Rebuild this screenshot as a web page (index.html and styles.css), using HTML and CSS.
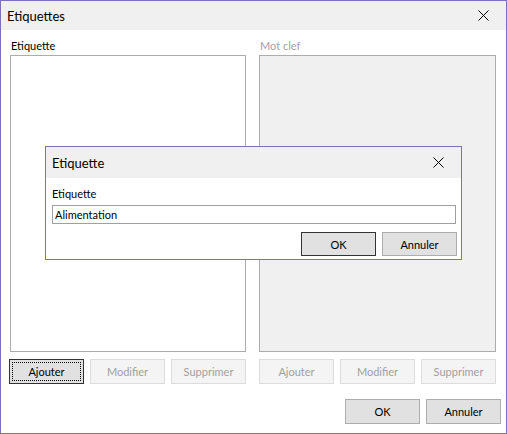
FILE: index.html
```html
<!DOCTYPE html>
<html lang="fr">
<head>
<meta charset="utf-8">
<title>Etiquettes</title>
<link rel="stylesheet" href="styles.css">
</head>
<body>
<div class="window">
  <div class="titlebar">
    <span class="title">Etiquettes</span>
    <span class="close">
      <svg width="11" height="11" viewBox="0 0 11 11"><path d="M0.5 0.5 L10.5 10.5 M10.5 0.5 L0.5 10.5" stroke="#000" stroke-width="1" fill="none"/></svg>
    </span>
  </div>
  <div class="content">
    <div class="columns">
      <div class="col col-left">
        <div class="label">Etiquette</div>
        <div class="listbox"></div>
        <div class="btnrow">
          <button class="btn focused"><span>Ajouter</span></button>
          <button class="btn disabled">Modifier</button>
          <button class="btn disabled">Supprimer</button>
        </div>
      </div>
      <div class="col col-right">
        <div class="label disabled-text">Mot clef</div>
        <div class="listbox listbox-disabled"></div>
        <div class="btnrow">
          <button class="btn disabled">Ajouter</button>
          <button class="btn disabled">Modifier</button>
          <button class="btn disabled">Supprimer</button>
        </div>
      </div>
    </div>
    <div class="footer">
      <button class="btn">OK</button>
      <button class="btn">Annuler</button>
    </div>
  </div>

  <div class="dialog">
    <div class="dlg-titlebar">
      <span class="dlg-title">Etiquette</span>
      <span class="dlg-close">
        <svg width="11" height="11" viewBox="0 0 11 11"><path d="M0.5 0.5 L10.5 10.5 M10.5 0.5 L0.5 10.5" stroke="#000" stroke-width="1" fill="none"/></svg>
      </span>
    </div>
    <div class="dlg-content">
      <div class="dlg-label">Etiquette</div>
      <div class="input">Alimentation</div>
      <div class="dlg-buttons">
        <button class="btn dlg-btn default">OK</button>
        <button class="btn dlg-btn">Annuler</button>
      </div>
    </div>
  </div>
</div>
</body>
</html>
```

FILE: styles.css
```css
* { box-sizing: border-box; }
html, body { margin: 0; padding: 0; background: #ffffff; }
body {
  font-family: Lato, "Liberation Sans", sans-serif;
  font-size: 11px;
  color: #000;
}
.window {
  position: relative;
  width: 507px;
  height: 434px;
  border: 1px solid #7d70b9;
  background: #ffffff;
  display: flex;
  flex-direction: column;
}
.titlebar {
  height: 29px;
  background: #f0f0f0;
  display: flex;
  align-items: center;
  justify-content: space-between;
  padding: 0 17px 0 6px;
}
.title { font-size: 13px; color: #000; }
.close { display: flex; width: 11px; height: 11px; }
.content {
  flex: 1;
  display: flex;
  flex-direction: column;
  padding: 9px 10px 9px 9px;
}
.columns { display: flex; gap: 13px; }
.col { width: 236px; display: flex; flex-direction: column; }
.col-right { width: 237px; }
.label { height: 16px; line-height: 14px; padding-left: 1px; }
.disabled-text { color: #a2a2a2; }
.listbox {
  height: 297px;
  border: 1px solid #acacac;
  background: #ffffff;
}
.listbox-disabled { background: #f0f0f0; }
.btnrow {
  display: flex;
  justify-content: space-between;
  margin-top: 7px;
}
.btn {
  width: 75px;
  height: 25px;
  border: 1px solid #adadad;
  background: #e1e1e1;
  font-family: Lato, "Liberation Sans", sans-serif;
  font-size: 11px;
  color: #000;
  padding: 0;
  display: flex;
  align-items: center;
  justify-content: center;
}
.btn.disabled {
  background: #f4f4f4;
  border-color: #dcdcdc;
  color: #a0a0a0;
}
.btn.focused {
  border: 1px solid #333333;
  outline: 1px dotted #000;
  outline-offset: -4px;
}
.col-left .btnrow { margin-left: -1px; }
.footer {
  display: flex;
  justify-content: flex-end;
  gap: 6px;
  margin-top: 15px;
  margin-right: -5px;
}
.footer .btn { height: 25px; }

.dialog {
  position: absolute;
  left: 44px;
  top: 145px;
  width: 417px;
  height: 114px;
  border: 1px solid #7d70b9;
  background: #ffffff;
  display: flex;
  flex-direction: column;
}
.dlg-titlebar {
  height: 31px;
  background: #f0f0f0;
  display: flex;
  align-items: center;
  justify-content: space-between;
  padding: 0 17px 0 6px;
}
.dlg-title { font-size: 13px; }
.dlg-close { display: flex; width: 11px; height: 11px; }
.dlg-content {
  padding: 9px 5px 0 6px;
  display: flex;
  flex-direction: column;
}
.dlg-label { height: 18px; line-height: 14px; }
.input {
  height: 19px;
  border: 1px solid #a0a0a0;
  padding: 0 2px;
  line-height: 17px;
}
.dlg-buttons {
  display: flex;
  justify-content: flex-end;
  gap: 6px;
  margin-top: 8px;
  margin-right: -1px;
}
.dlg-btn { height: 24px; }
.dlg-btn.default { border-color: #333333; }
```
